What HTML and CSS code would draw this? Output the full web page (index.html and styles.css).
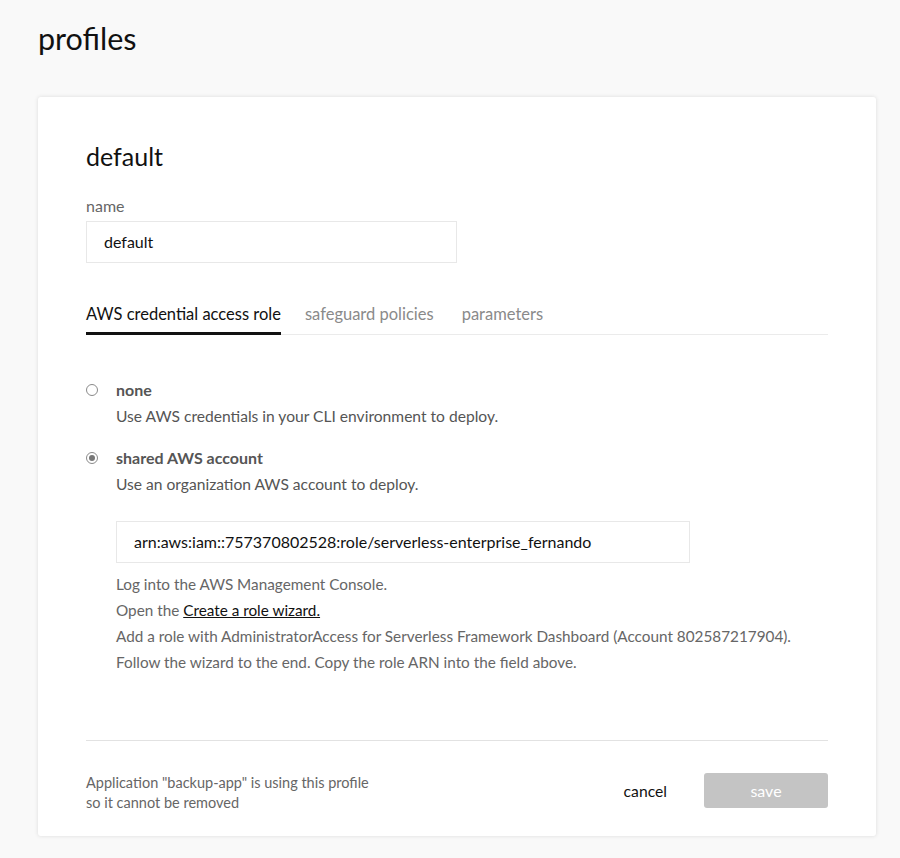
FILE: index.html
```html
<!DOCTYPE html>
<html>
<head>
<meta charset="utf-8">
<link rel="stylesheet" href="styles.css">
</head>
<body>
<div class="page">
  <h1 class="page-title">profiles</h1>
  <div class="card">
    <h2 class="card-title">default</h2>
    <label class="field-label">name</label>
    <div class="text-input name-input">default</div>

    <div class="tabs">
      <div class="tab active">AWS credential access role</div>
      <div class="tab">safeguard policies</div>
      <div class="tab">parameters</div>
      <div class="tab-rest"></div>
    </div>

    <div class="options">
      <div class="option">
        <span class="radio"></span>
        <div class="option-body">
          <div class="option-title">none</div>
          <div class="option-desc">Use AWS credentials in your CLI environment to deploy.</div>
        </div>
      </div>
      <div class="option">
        <span class="radio checked"></span>
        <div class="option-body">
          <div class="option-title">shared AWS account</div>
          <div class="option-desc">Use an organization AWS account to deploy.</div>
          <div class="text-input arn-input">arn:aws:iam::757370802528:role/serverless-enterprise_fernando</div>
          <ol class="help">
            <li>Log into the AWS Management Console.</li>
            <li>Open the <a class="link">Create a role wizard.</a></li>
            <li>Add a role with AdministratorAccess for Serverless Framework Dashboard (Account 802587217904).</li>
            <li>Follow the wizard to the end. Copy the role ARN into the field above.</li>
          </ol>
        </div>
      </div>
    </div>

    <div class="footer">
      <div class="footer-note">Application "backup-app" is using this profile<br>so it cannot be removed</div>
      <div class="actions">
        <span class="cancel">cancel</span>
        <span class="save">save</span>
      </div>
    </div>
  </div>
</div>
</body>
</html>
```
FILE: styles.css
```css
html, body {
  margin: 0;
  padding: 0;
  background: #f9f9f9;
}
body {
  font-family: "Lato", "Open Sans", sans-serif;
  color: #000;
}
.page {
  padding: 18px 24px 22px 38px;
}
.page-title {
  margin: 0;
  font-weight: 400;
  font-size: 30.5px;
  line-height: 40px;
  color: #111;
}
.card {
  margin-top: 39px;
  background: #fff;
  border-radius: 3px;
  box-shadow: 0 0 4px rgba(0,0,0,0.12);
  padding: 40px 48px 23px 48px;
}
.card-title {
  margin: 0;
  font-weight: 400;
  font-size: 25px;
  line-height: 38px;
  color: #111;
}
.field-label {
  display: block;
  margin-top: 22px;
  font-size: 16px;
  line-height: 18px;
  color: #666;
}
.text-input {
  box-sizing: border-box;
  border: 1px solid #e8e8e8;
  height: 42px;
  font-size: 16px;
  line-height: 40px;
  padding: 0 17px;
  color: #111;
}
.name-input {
  margin-top: 6px;
  width: 371px;
}
.tabs {
  display: flex;
  margin-top: 41px;
}
.tab {
  font-size: 16.5px;
  line-height: 20px;
  padding-bottom: 10px;
  color: #8a8a8a;
  border-bottom: 1px solid #ebebeb;
  padding-right: 28px;
}
.tab.active {
  color: #111;
  border-bottom: 3px solid #111;
  padding-bottom: 8px;
  padding-right: 0;
}
.tab.active + .tab { padding-left: 24px; }
.tab-rest {
  flex: 1;
  border-bottom: 1px solid #ebebeb;
}
.options {
  margin-top: 45px;
  padding-bottom: 43px;
  border-bottom: 1px solid #e2e2e2;
}
.option {
  display: flex;
  align-items: flex-start;
  margin-bottom: 22px;
}
.radio {
  box-sizing: border-box;
  width: 12px;
  height: 12px;
  border: 1px solid #8a8a8a;
  border-radius: 50%;
  margin: 4px 18px 0 0;
  flex: none;
  position: relative;
}
.radio.checked::after {
  content: "";
  position: absolute;
  left: 2px;
  top: 2px;
  width: 6px;
  height: 6px;
  border-radius: 50%;
  background: #777;
}
.option-title {
  font-size: 16px;
  font-weight: 700;
  line-height: 20px;
  color: #555;
}
.option-desc {
  margin-top: 6px;
  font-size: 15.6px;
  line-height: 20px;
  color: #555;
}
.arn-input {
  margin-top: 27px;
  width: 574px;
}
.help {
  list-style: none;
  margin: 8px 0 0 0;
  padding: 0;
  font-size: 15.3px;
  line-height: 26px;
  color: #666;
}
.link {
  color: #111;
  text-decoration: underline;
}
.footer {
  display: flex;
  justify-content: space-between;
  align-items: flex-start;
  padding-top: 32px;
}
.footer-note {
  font-size: 14.5px;
  line-height: 20px;
  color: #666;
}
.actions {
  display: flex;
  align-items: center;
}
.cancel {
  font-size: 15.7px;
  color: #111;
  margin-right: 37px;
}
.save {
  display: inline-block;
  width: 124px;
  height: 35px;
  line-height: 35px;
  text-align: center;
  background: #c4c4c4;
  color: #fff;
  border-radius: 3px;
  font-size: 16px;
}
```
